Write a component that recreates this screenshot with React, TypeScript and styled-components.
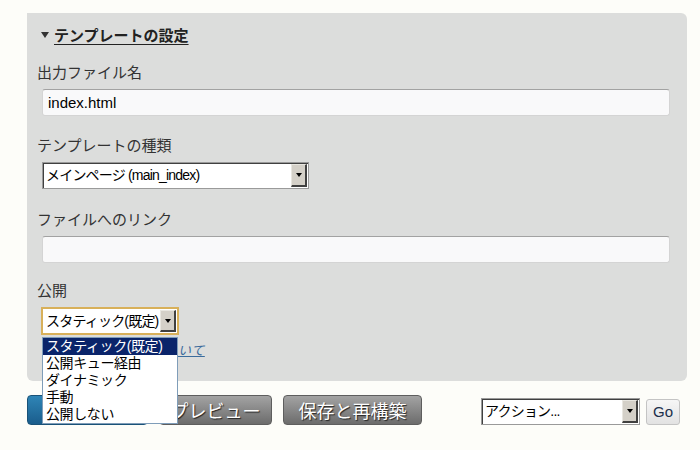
import React from "react";
import styled, { createGlobalStyle } from "styled-components";

const Global = createGlobalStyle`
  html, body { margin: 0; padding: 0; background: #fdfdf9; }
  body { font-family: "Liberation Sans", "Noto Sans CJK JP", sans-serif; color: #333; }
  * { box-sizing: border-box; }
`;

const Page = styled.div`
  width: 700px;
  height: 450px;
  padding: 13px 13px 0 27px;
  overflow: hidden;
`;

const Panel = styled.section`
  width: 660px;
  background: #dcdddc;
  border-radius: 0 6px 6px 6px;
  padding: 11px 16px 20px 10px;
`;

const Heading = styled.div`
  display: flex;
  align-items: center;
  gap: 5px;
  padding-left: 4px;
  height: 20px;
  margin-bottom: 19px;
`;

const Caret = styled.span`
  width: 0;
  height: 0;
  margin-top: 1px;
  border-left: 4.5px solid transparent;
  border-right: 4.5px solid transparent;
  border-top: 6px solid #333;
`;

const HeadingText = styled.span`
  font-size: 15px;
  font-weight: bold;
  color: #222;
  text-decoration: underline;
  text-underline-offset: 3px;
`;

const Field = styled.div<{ $gap?: number }>`
  display: flex;
  flex-direction: column;
  align-items: flex-start;
  margin-bottom: ${(p) => p.$gap ?? 20}px;
  position: relative;
`;

const Label = styled.label`
  font-size: 15px;
  line-height: 20px;
  color: #333;
  margin-bottom: 6px;
`;

const TextInput = styled.div`
  margin-left: 5px;
  width: 628px;
  height: 27px;
  background: #f9f9fa;
  border: 1px solid #d4d4d4;
  border-top-color: #a2a2a2;
  border-radius: 3px;
  font-size: 15px;
  line-height: 25px;
  padding-left: 5px;
  color: #000;
`;

const SelectBox = styled.div<{ $w: number; $focus?: boolean }>`
  width: ${(p) => p.$w}px;
  height: ${(p) => (p.$focus ? 28 : 27)}px;
  margin-left: ${(p) => (p.$focus ? 4 : 5)}px;
  display: flex;
  background: #fff;
  border: ${(p) => (p.$focus ? "2px solid #d8b05a" : "1px solid #9a9a9a")};
  padding: 1px;
  box-shadow: ${(p) => (p.$focus ? "none" : "inset 1px 1px 0 #404040")};
`;

const SelectText = styled.span`
  flex: 1;
  font-size: 14px;
  letter-spacing: -0.8px;
  line-height: 22px;
  padding-left: 2px;
  color: #000;
  white-space: nowrap;
  overflow: hidden;
`;

const ArrowBtn = styled.span`
  width: 16px;
  flex: none;
  background: #d4d0c8;
  border-top: 1px solid #e8e6e0;
  border-left: 1px solid #e8e6e0;
  border-right: 2px solid #404040;
  border-bottom: 2px solid #404040;
  display: flex;
  align-items: center;
  justify-content: center;
  &::after {
    content: "";
    border-left: 3.5px solid transparent;
    border-right: 3.5px solid transparent;
    border-top: 4px solid #000;
  }
`;

const HelpLink = styled.a`
  margin-left: 5px;
  margin-top: 6px;
  font-size: 13px;
  line-height: 20px;
  letter-spacing: 0.6px;
  font-style: italic;
  color: #3c6c9c;
  text-decoration: underline;
`;

const DropList = styled.ul`
  position: absolute;
  left: 5px;
  top: 56px;
  width: 136px;
  margin: 0;
  padding: 0;
  list-style: none;
  background: #fff;
  border: 1px solid #7f9db9;
  z-index: 10;
`;

const DropItem = styled.li<{ $active?: boolean }>`
  height: 17px;
  font-size: 14px;
  letter-spacing: -0.4px;
  line-height: 17px;
  padding-left: 3px;
  color: ${(p) => (p.$active ? "#fff" : "#000")};
  background: ${(p) => (p.$active ? "#0a246a" : "transparent")};
  white-space: nowrap;
`;

const ButtonRow = styled.div`
  display: flex;
  align-items: center;
  margin-top: 13px;
  gap: 11px;
  padding-right: 7px;
`;

const ActionButton = styled.button<{ $primary?: boolean; $w: number }>`
  width: ${(p) => p.$w}px;
  height: 30px;
  border-radius: 4px;
  font-family: "Liberation Sans", "Noto Sans CJK JP", sans-serif;
  font-size: 18px;
  color: #fff;
  text-shadow: 1px 1px 1px #222;
  padding: 0;
  border: 1px solid ${(p) => (p.$primary ? "#1a5278" : "#5e5e5e")};
  background: ${(p) =>
    p.$primary
      ? "linear-gradient(#2f85b6, #1a5d8c)"
      : "linear-gradient(#a3a3a3, #6c6c6c)"};
`;

const Actions = styled.div`
  margin-left: auto;
  display: flex;
  align-items: center;
  gap: 6px;
`;

const ActionSelect = styled(SelectBox)`
  margin-left: 0;
  margin-top: 4px;
`;

const GoButton = styled.button`
  width: 34px;
  height: 26px;
  margin-top: 4px;
  border: 1px solid #c4c4c4;
  border-radius: 3px;
  background: linear-gradient(#f6f6f6, #e2e2e2);
  font-family: "Liberation Sans", sans-serif;
  font-size: 15px;
  color: #1a2f4a;
  padding: 0;
`;

export default function App() {
  return (
    <>
      <Global />
      <Page>
        <Panel>
          <Heading>
            <Caret />
            <HeadingText>テンプレートの設定</HeadingText>
          </Heading>
          <Field>
            <Label>出力ファイル名</Label>
            <TextInput>index.html</TextInput>
          </Field>
          <Field $gap={21}>
            <Label>テンプレートの種類</Label>
            <SelectBox $w={267}>
              <SelectText>メインページ (main_index)</SelectText>
              <ArrowBtn />
            </SelectBox>
          </Field>
          <Field $gap={18}>
            <Label>ファイルへのリンク</Label>
            <TextInput />
          </Field>
          <Field $gap={0}>
            <Label>公開</Label>
            <SelectBox $w={138} $focus>
              <SelectText>スタティック(既定)</SelectText>
              <ArrowBtn />
            </SelectBox>
            <HelpLink>公開の種類と方法について</HelpLink>
            <DropList>
              <DropItem $active>スタティック(既定)</DropItem>
              <DropItem>公開キュー経由</DropItem>
              <DropItem>ダイナミック</DropItem>
              <DropItem>手動</DropItem>
              <DropItem>公開しない</DropItem>
            </DropList>
          </Field>
        </Panel>
        <ButtonRow>
          <ActionButton $primary $w={121}>変更を保存</ActionButton>
          <ActionButton $w={113}>プレビュー</ActionButton>
          <ActionButton $w={139}>保存と再構築</ActionButton>
          <Actions>
            <ActionSelect $w={159}>
              <SelectText>アクション...</SelectText>
              <ArrowBtn />
            </ActionSelect>
            <GoButton>Go</GoButton>
          </Actions>
        </ButtonRow>
      </Page>
    </>
  );
}
